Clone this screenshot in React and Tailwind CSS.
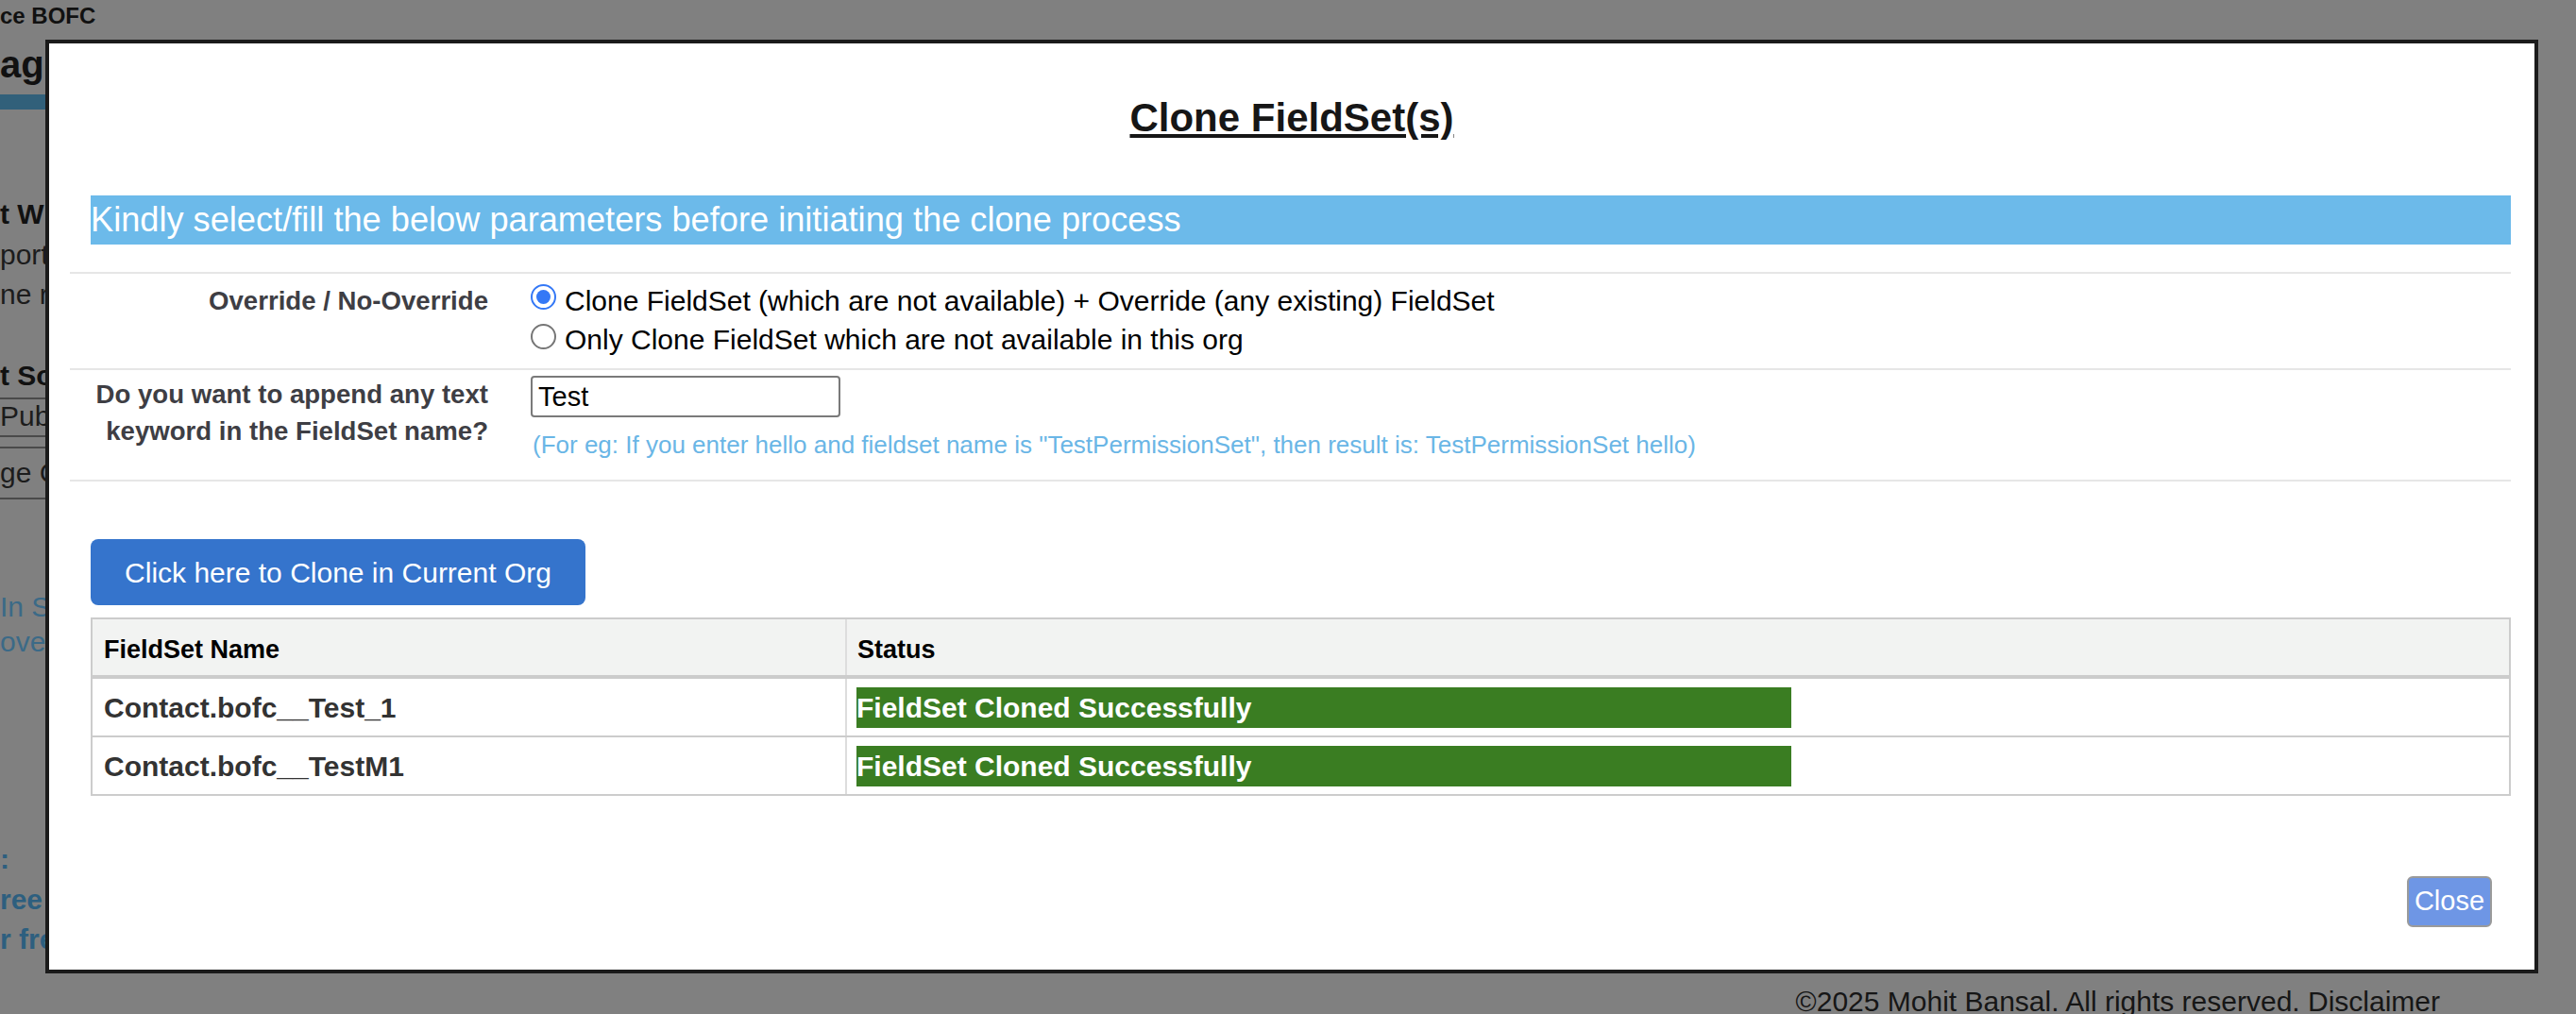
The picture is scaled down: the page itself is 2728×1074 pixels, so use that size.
import React from "react";

const results = [
  { name: "Contact.bofc__Test_1", status: "FieldSet Cloned Successfully" },
  { name: "Contact.bofc__TestM1", status: "FieldSet Cloned Successfully" },
];

function Radio({ checked }) {
  if (checked) {
    return (
      <span className="mt-[3px] flex h-[27px] w-[27px] shrink-0 items-center justify-center rounded-full border-2 border-[#3478f6] bg-white">
        <span className="h-[15px] w-[15px] rounded-full bg-[#3478f6]" />
      </span>
    );
  }
  return (
    <span className="mt-[4px] h-[27px] w-[27px] shrink-0 rounded-full border-2 border-[#767676] bg-white" />
  );
}

// Page behind the dialog (only a strip of it is visible)
function BackPage() {
  return (
    <div className="flex h-full flex-col overflow-hidden bg-[#808080] text-[#111]">
      <div className="w-[240px] whitespace-nowrap">
        <div className="mt-[3px] text-[24px] font-bold leading-[28px]">ce BOFC</div>
        <div className="mt-[14px] text-[40px] font-bold leading-[46px]">age</div>
        <div className="mt-[9px] h-[16px] bg-[#31607a]" />
        <div className="mt-[93px] text-[30px] font-bold leading-[36px]">t Wh</div>
        <div className="mt-[7px] text-[30px] leading-[36px] text-[#1c1c1c]">port</div>
        <div className="mt-[6px] text-[30px] leading-[36px] text-[#1c1c1c]">ne r</div>
        <div className="mt-[50px] text-[30px] font-bold leading-[36px]">t So</div>
        <div className="mt-[5px] h-[42px] border-y-2 border-[#4a4a4a] text-[30px] leading-[36px] text-[#1c1c1c]">
          Publ
        </div>
        <div className="mt-[10px] h-[56px] border-y-2 border-[#4a4a4a] pt-[8px] text-[30px] leading-[36px] text-[#1c1c1c]">
          ge C
        </div>
        <div className="mt-[96px] text-[30px] leading-[36px] text-[#3b6a87]">In St</div>
        <div className="mt-[1px] text-[30px] leading-[36px] text-[#3b6a87]">ove f</div>
        <div className="mt-[194px] text-[30px] font-bold leading-[36px] text-[#2d5f7f]">:</div>
        <div className="mt-[7px] text-[30px] font-bold leading-[36px] text-[#2d5f7f]">ree</div>
        <div className="mt-[6px] text-[30px] font-bold leading-[36px] text-[#2d5f7f]">r fre</div>
      </div>
      <div className="mt-[30px] pr-[144px] text-right text-[30px] leading-[36px] text-[#161616]">
        ©2025 Mohit Bansal. All rights reserved. Disclaimer
      </div>
    </div>
  );
}

function CloneDialog() {
  return (
    <div className="absolute left-[48px] top-[42px] flex h-[989px] w-[2640px] flex-col border-4 border-[#1b1b1b] bg-white">
      {/* Title */}
      <h2 className="pt-[55px] text-center text-[42px] font-bold leading-[48px] text-[#161616] underline decoration-[4px] underline-offset-[3px]">
        Clone FieldSet(s)
      </h2>

      <div className="pl-[22px] pr-[25px]">
        {/* Info banner */}
        <div className="ml-[22px] mt-[58px] h-[52px] bg-[#6cbaea] text-[36.2px] leading-[52px] text-white">
          Kindly select/fill the below parameters before initiating the clone process
        </div>

        {/* Parameters */}
        <div className="mt-[29px] border-y-2 border-[#e6e6e6]">
          <div className="flex h-[100px] pt-[8px]">
            <div className="w-[443px] text-right text-[27.6px] font-bold leading-[41px] text-[#3e3e44]">
              Override / No-Override
            </div>
            <div className="ml-[45px] flex flex-col text-[30px] leading-[41px] text-black">
              <label className="flex items-start gap-[9px]">
                <Radio checked />
                <span>Clone FieldSet (which are not available) + Override (any existing) FieldSet</span>
              </label>
              <label className="flex items-start gap-[9px]">
                <Radio />
                <span>Only Clone FieldSet which are not available in this org</span>
              </label>
            </div>
          </div>
          <div className="flex h-[118px] border-t-2 border-[#e6e6e6] pt-[6px]">
            <div className="w-[443px] text-right text-[27.6px] font-bold leading-[39px] text-[#3e3e44]">
              Do you want to append any text
              <br />
              keyword in the FieldSet name?
            </div>
            <div className="ml-[45px] flex flex-col">
              <input
                readOnly
                value="Test"
                className="h-[44px] w-[328px] rounded-[4px] border-2 border-[#7a7a7a] px-[6px] text-[29px] text-black outline-none"
              />
              <div className="mt-[13px] ml-[2px] text-[26px] leading-[32px] text-[#6ab6e6]">
                (For eg: If you enter hello and fieldset name is "TestPermissionSet", then result is: TestPermissionSet hello)
              </div>
            </div>
          </div>
        </div>

        <button className="ml-[22px] mt-[61px] h-[70px] w-[524px] rounded-[8px] bg-[#3574cc] text-center text-[30px] text-white">
          Click here to Clone in Current Org
        </button>

        {/* Results table */}
        <div className="ml-[22px] mt-[13px] border-2 border-[#cccccc]">
          <div className="flex h-[63px] border-b-4 border-[#cccccc] bg-[#f2f3f2] text-[27px] font-bold leading-[30px] text-black">
            <div className="w-[799px] border-r-2 border-[#dddddd] pl-[12px] pt-[17px]">FieldSet Name</div>
            <div className="flex-1 pl-[11px] pt-[17px]">Status</div>
          </div>
          {results.map((r, i) => (
            <div
              key={r.name}
              className={
                i < results.length - 1
                  ? "flex h-[62px] border-b-2 border-[#cccccc] text-[30px] font-bold"
                  : "flex h-[60px] text-[30px] font-bold"
              }
            >
              <div className="flex w-[799px] items-center border-r-2 border-[#dddddd] pl-[12px] text-[#333333]">
                {r.name}
              </div>
              <div className="flex flex-1 items-center pl-[10px]">
                <span className="block h-[43px] w-[990px] bg-[#3a7d22] leading-[43px] text-white">{r.status}</span>
              </div>
            </div>
          ))}
        </div>
      </div>

      <div className="mt-auto flex justify-end pb-[45px] pr-[45px]">
        <button className="h-[54px] w-[90px] rounded-[6px] border-2 border-[#9a9a9a] bg-[#6e96e5] text-center text-[29px] text-white">
          Close
        </button>
      </div>
    </div>
  );
}

export default function App() {
  return (
    <div className="relative h-[1074px] w-[2728px] overflow-hidden font-['Liberation_Sans',Arial,sans-serif]">
      <BackPage />
      <CloneDialog />
    </div>
  );
}
